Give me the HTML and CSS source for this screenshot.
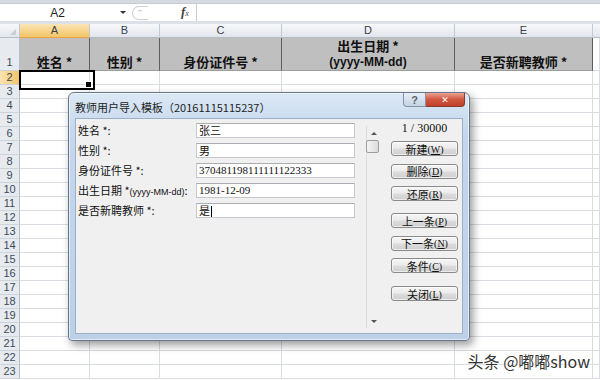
FILE: index.html
```html
<!DOCTYPE html>
<html lang="zh-CN">
<head>
    <meta charset="UTF-8">
    <title>教师用户导入模板</title>
    <link rel="stylesheet" href="styles.css">
</head>
<body>
    <div class="excel">
        <div class="ribbon-edge"></div>
        <div class="formula-bar">
            <div class="name-box">A2</div>
            <div class="name-drop"><span></span></div>
            <div class="splitter"></div>
            <div class="fx"><i>f</i><small>x</small></div>
            <div class="formula-input"></div>
        </div>
        <div class="band"></div>

        <div class="sheet" id="sheet">
            <!-- 列标题 -->
            <div class="head corner"></div>
            <div class="head active">A</div>
            <div class="head">B</div>
            <div class="head">C</div>
            <div class="head">D</div>
            <div class="head">E</div>
            <div class="head rest"></div>

            <!-- 第 1 行：模板字段 -->
            <div class="row-head tall">1</div>
            <div class="title-cell">姓名 *</div>
            <div class="title-cell">性别 *</div>
            <div class="title-cell">身份证件号 *</div>
            <div class="title-cell"><span>出生日期 *</span><span class="fmt">(yyyy-MM-dd)</span></div>
            <div class="title-cell">是否新聘教师 *</div>
            <div class="cell"></div>
            <!-- 其余行由脚本生成 -->
        </div>

        <div class="dialog">
            <div class="dialog-title">教师用户导入模板（20161115115237）</div>
            <div class="caption-btns">
                <span class="cap-help">?</span>
                <span class="cap-close">✕</span>
            </div>
            <div class="dialog-body">
                <div class="fields">
                    <div class="field"><label>姓名 *:</label><div class="input">张三</div></div>
                    <div class="field"><label>性别 *:</label><div class="input">男</div></div>
                    <div class="field"><label>身份证件号 *:</label><div class="input num">370481198111111122333</div></div>
                    <div class="field"><label>出生日期 *<small>(yyyy-MM-dd)</small>:</label><div class="input num">1981-12-09</div></div>
                    <div class="field"><label>是否新聘教师 *:</label><div class="input">是<span class="caret"></span></div></div>
                </div>
                <div class="scroll">
                    <span class="arrow up"></span>
                    <span class="thumb"></span>
                    <span class="arrow down"></span>
                </div>
                <div class="actions">
                    <div class="counter">1 / 30000</div>
                    <div class="btn-group">
                        <button>新建<span class="key">(<u>W</u>)</span></button>
                        <button>删除<span class="key">(<u>D</u>)</span></button>
                        <button>还原<span class="key">(<u>R</u>)</span></button>
                    </div>
                    <div class="btn-group">
                        <button>上一条<span class="key">(<u>P</u>)</span></button>
                        <button>下一条<span class="key">(<u>N</u>)</span></button>
                        <button>条件<span class="key">(<u>C</u>)</span></button>
                    </div>
                    <div class="btn-group">
                        <button>关闭<span class="key">(<u>L</u>)</span></button>
                    </div>
                </div>
            </div>
        </div>

        <div class="watermark">头条 @嘟嘟show</div>
    </div>

    <script>
        // 生成第 2 ~ 23 行
        const sheet = document.getElementById('sheet');
        for (let r = 2; r <= 23; r++) {
            let html = `<div class="row-head${r === 2 ? ' active' : ''}">${r}</div>`;
            for (let c = 0; c < 6; c++) {
                html += `<div class="cell${r === 2 && c === 0 ? ' selected' : ''}"></div>`;
            }
            sheet.insertAdjacentHTML('beforeend', html);
        }
    </script>
</body>
</html>
```

FILE: styles.css
```css
* {
    margin: 0;
    padding: 0;
    box-sizing: border-box;
}

body {
    width: 600px;
    height: 380px;
    overflow: hidden;
    background: #fff;
    font-family: "Noto Sans CJK SC", "Liberation Sans", sans-serif;
}

.excel {
    position: relative;
    width: 600px;
    height: 380px;
    overflow: hidden;
}

/* 编辑栏 */
.ribbon-edge {
    height: 4px;
    background: #d5dae0;
    border-bottom: 1px solid #c6ccd4;
}

.formula-bar {
    display: flex;
    align-items: center;
    height: 17px;
    background: #fff;
}

.name-box {
    width: 115px;
    text-align: center;
    font: 12px "Liberation Sans", sans-serif;
    color: #222;
}

.name-drop {
    width: 15px;
    display: flex;
    justify-content: center;
}

.name-drop span {
    border-left: 3px solid transparent;
    border-right: 3px solid transparent;
    border-top: 3px solid #333;
}

.splitter {
    position: relative;
    margin-left: 2px;
    width: 16px;
    height: 14px;
    border: 1px solid #cdd1d6;
    border-right: none;
    border-radius: 7px 0 0 7px;
}

.splitter::after {
    content: "";
    position: absolute;
    left: 5px;
    top: 3px;
    width: 4px;
    height: 3px;
    border-top: 1px solid #b8bcc2;
    border-radius: 2px 2px 0 0;
}

.fx {
    margin-left: 33px;
    width: 11px;
    font-family: "Liberation Serif", serif;
    color: #444;
    line-height: 14px;
}

.fx i {
    font-size: 13px;
    font-weight: bold;
}

.fx small {
    font-size: 8px;
    font-style: italic;
}

.formula-input {
    flex: 1;
    height: 100%;
    margin-left: 4px;
    border-left: 1px solid #c5cbd3;
}

.band {
    height: 3px;
    background: #dde1e7;
}

/* 工作表 */
.sheet {
    display: grid;
    grid-template-columns: 20px 70px 70px 122px 173px 138px 1fr;
    grid-template-rows: 14px 33px;
    grid-auto-rows: 14px;
}

.head {
    background: linear-gradient(#f7f8fa, #e2e6eb);
    border-right: 1px solid #c3cad3;
    border-bottom: 1px solid #b3bcc7;
    font: 11px/13px "Liberation Sans", sans-serif;
    color: #39424d;
    text-align: center;
}

.head.active {
    background: linear-gradient(#fbe5b6, #f3c566);
    border-bottom-color: #f0a040;
}

.head.rest {
    border-right: none;
}

.corner {
    position: relative;
}

.corner::after {
    content: "";
    position: absolute;
    right: 3px;
    bottom: 2px;
    border-left: 6px solid transparent;
    border-bottom: 6px solid #c9ced5;
}

.row-head {
    background: #e7ebf0;
    border-right: 1px solid #b3bcc7;
    border-bottom: 1px solid #cdd3da;
    font: 11px/13px "Liberation Sans", sans-serif;
    color: #404b58;
    text-align: center;
}

.row-head.tall {
    display: flex;
    align-items: flex-end;
    justify-content: center;
    padding-bottom: 1px;
}

.row-head.active {
    background: linear-gradient(90deg, #fbe3b1, #f3c566);
    border-right-color: #f0a040;
}

.title-cell {
    display: flex;
    flex-direction: column;
    justify-content: flex-end;
    align-items: center;
    background: #bfbfbf;
    border-right: 1px solid #5e5e5e;
    border-bottom: 1px solid #9c9c9c;
    font-size: 13px;
    font-weight: bold;
    line-height: 16px;
    color: #111;
}

.title-cell .fmt {
    font-family: "Liberation Sans", sans-serif;
    font-size: 12px;
}

.cell {
    border-right: 1px solid #d9dce0;
    border-bottom: 1px solid #d9dce0;
}

.cell.selected {
    position: relative;
}

.cell.selected::after {
    content: "";
    position: absolute;
    left: -1px;
    top: -1px;
    width: 72px;
    height: 16px;
    border: 2px solid #000;
}

.cell.selected::before {
    content: "";
    position: absolute;
    right: -3px;
    bottom: -4px;
    width: 5px;
    height: 5px;
    background: #000;
    border: 1px solid #fff;
    z-index: 1;
}

/* 记录单对话框 */
.dialog {
    position: absolute;
    left: 68px;
    top: 92px;
    width: 402px;
    height: 249px;
    display: flex;
    flex-direction: column;
    padding: 0 6px 6px;
    background: linear-gradient(#dce8f5, #c4d7ed 40px, #bcd0e8);
    border: 1px solid #66778b;
    border-radius: 6px 6px 4px 4px;
    box-shadow: inset 0 0 0 1px rgba(255,255,255,0.55), 3px 4px 9px rgba(0,0,0,0.4);
}

.dialog-title {
    height: 25px;
    padding-top: 7px;
    font-size: 11px;
    line-height: 14px;
    color: #1d1d1d;
}

.caption-btns {
    position: absolute;
    top: 0;
    right: 4px;
    display: flex;
    height: 14px;
}

.caption-btns span {
    display: flex;
    align-items: center;
    justify-content: center;
    height: 14px;
}

.cap-help {
    width: 23px;
    background: linear-gradient(#e8eef5, #c6d3e3);
    border: 1px solid #8294aa;
    border-top: none;
    border-radius: 0 0 0 4px;
    font: bold 11px "Liberation Sans", sans-serif;
    color: #5a6576;
}

.cap-close {
    width: 39px;
    background: linear-gradient(#eba392, #d0563f 50%, #c2402a);
    border: 1px solid #8c3a2c;
    border-top: none;
    border-left: none;
    border-radius: 0 0 4px 0;
    font: bold 9px "DejaVu Sans", sans-serif;
    color: #fff;
}

.dialog-body {
    flex: 1;
    display: flex;
    background: #f0f0f0;
    border: 1px solid #9bb0c8;
}

.fields {
    width: 279px;
    padding: 4px 0 0 2px;
}

.field {
    display: flex;
    height: 15px;
    margin-bottom: 5px;
}

.field label {
    width: 118px;
    font-size: 11px;
    line-height: 15px;
    color: #111;
}

.field label small {
    font: 9px "Liberation Sans", sans-serif;
}

.input {
    width: 159px;
    padding-left: 2px;
    background: #fff;
    border: 1px solid #c5c9cf;
    border-top-color: #abadb3;
    font-size: 11px;
    line-height: 13px;
    color: #111;
}

.input.num {
    font-family: "Liberation Serif", serif;
}

.caret {
    display: inline-block;
    width: 1px;
    height: 11px;
    margin-left: 1px;
    background: #000;
    vertical-align: -2px;
}

.scroll {
    display: flex;
    flex-direction: column;
    align-items: center;
    width: 14px;
    margin: 7px 0 5px 11px;
    border-left: 1px solid #dcdcdc;
}

.arrow {
    height: 14px;
    display: flex;
    align-items: center;
}

.arrow::before {
    content: "";
    border-left: 3px solid transparent;
    border-right: 3px solid transparent;
}

.arrow.up::before {
    border-bottom: 3px solid #555;
}

.arrow.down {
    margin-top: auto;
}

.arrow.down::before {
    border-top: 3px solid #555;
}

.thumb {
    width: 13px;
    height: 13px;
    margin-left: -2px;
    background: linear-gradient(90deg, #f4f4f4, #dcdcdc);
    border: 1px solid #9d9d9d;
    border-radius: 2px;
}

.actions {
    flex: 1;
    padding: 3px 0 0 11px;
}

.counter {
    width: 67px;
    margin-bottom: 6px;
    text-align: center;
    font: 12px/13px "Liberation Serif", serif;
    color: #111;
}

.btn-group {
    display: flex;
    flex-direction: column;
    gap: 7.5px;
    margin-bottom: 12px;
}

.btn-group:nth-child(3) {
    margin-bottom: 13px;
}

button {
    width: 67px;
    height: 15px;
    background: linear-gradient(#f6f6f6, #ebebeb 48%, #dcdcdc 52%, #cfcfcf);
    border: 1px solid #8a8a8a;
    border-radius: 3px;
    box-shadow: inset 0 0 0 1px rgba(255,255,255,0.6);
    font-family: "Noto Sans CJK SC", sans-serif;
    font-size: 11px;
    line-height: 12px;
    color: #111;
}

button .key {
    font: 10px "Liberation Serif", serif;
    vertical-align: 1px;
}

/* 水印 */
.watermark {
    position: absolute;
    right: 10px;
    bottom: 10px;
    font-size: 16px;
    line-height: 18px;
    color: #333;
    text-shadow: 0 0 2px #fff, 0 0 3px #fff;
}
```
